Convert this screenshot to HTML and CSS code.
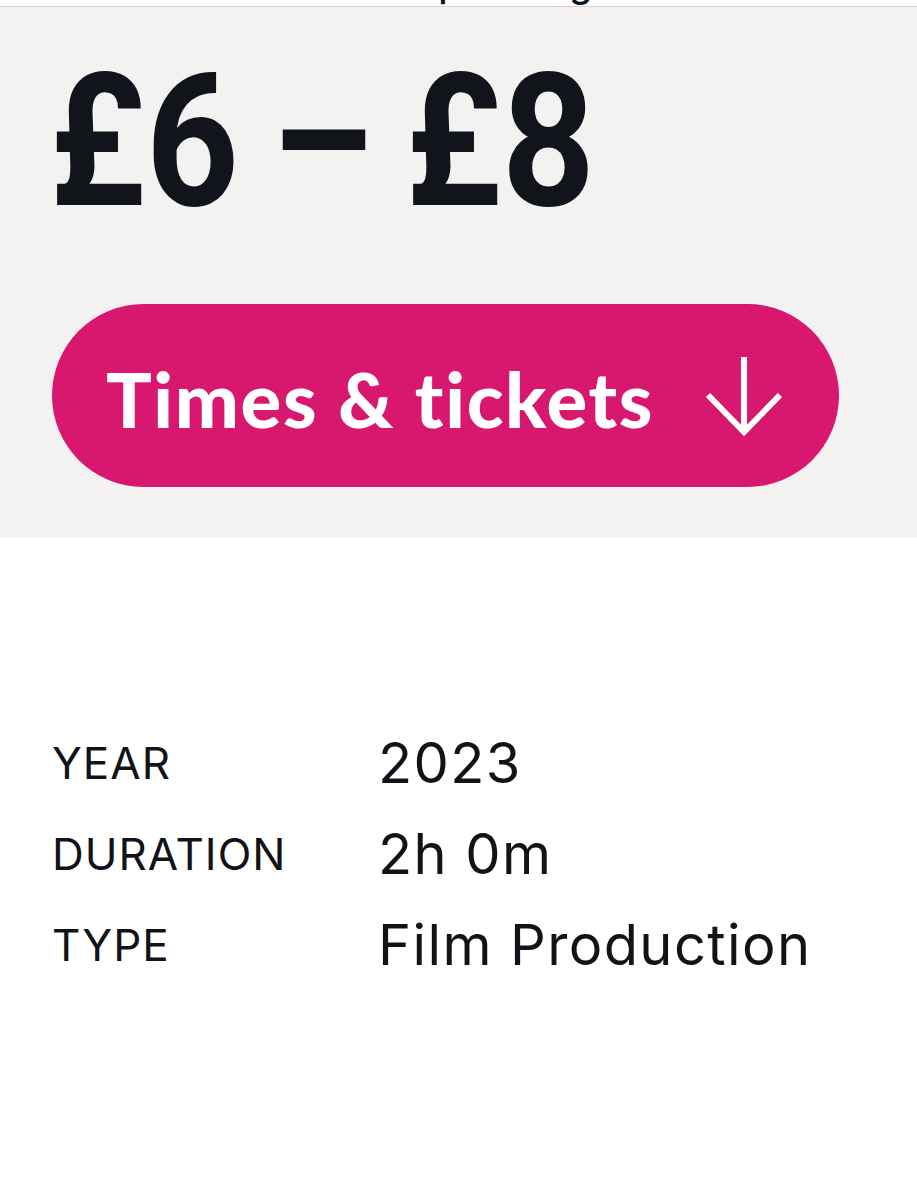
FILE: index.html
```html
<!DOCTYPE html>
<html lang="en">
<head>
<meta charset="utf-8">
<title>Times &amp; tickets</title>
<link rel="stylesheet" href="styles.css">
</head>
<body>
<div class="cut"><span class="cut-text">upcoming</span></div>
<section class="hero">
  <p class="price"><span class="price-text">£6 – £8</span></p>
  <a class="cta" href="#times">
    <span class="cta-label">Times &amp; tickets</span>
    <svg class="cta-icon" viewBox="0 0 80 82" width="80" height="82" aria-hidden="true">
      <path d="M40 2 V77" fill="none" stroke="#fff" stroke-width="6"/>
      <path d="M4 40 L40 77 L76 40" fill="none" stroke="#fff" stroke-width="6" stroke-linejoin="miter"/>
    </svg>
  </a>
</section>
<dl class="details">
  <dt class="label">YEAR</dt><dd class="value">2023</dd>
  <dt class="label">DURATION</dt><dd class="value">2h 0m</dd>
  <dt class="label">TYPE</dt><dd class="value">Film Production</dd>
</dl>
</body>
</html>
```

FILE: styles.css
```css
html, body {
  margin: 0;
  padding: 0;
  background: #ffffff;
  color: #111319;
}

.cut {
  height: 6px;
  overflow: hidden;
  padding-left: 416px;
  border-bottom: 1px solid #d2d2d2;
}

.cut-text {
  display: block;
  margin-top: -35px;
  font-family: Inter, "Liberation Sans", sans-serif;
  font-size: 37px;
  line-height: 37px;
  font-weight: 500;
  color: #111319;
}

.hero {
  background: #f4f2f1;
  padding: 41px 78px 51px 52px;
}

.price {
  margin: 0 0 0 -3px;
  font-family: Roboto, "Liberation Sans", sans-serif;
  font-weight: 700;
  font-size: 186px;
  line-height: 1;
  color: #11141a;
  white-space: nowrap;
}

.price-text {
  display: inline-block;
  transform: scaleX(0.875);
  transform-origin: left center;
  word-spacing: -10px;
}

.cta {
  margin-top: 70px;
  box-sizing: border-box;
  height: 183px;
  width: 787px;
  border-radius: 92px;
  background: #d8176f;
  display: flex;
  align-items: center;
  justify-content: space-between;
  padding: 0 55px 0 54px;
  text-decoration: none;
  color: #ffffff;
}

.cta-label {
  font-family: Lato, "Open Sans", sans-serif;
  font-weight: 900;
  font-size: 76px;
  line-height: 1;
  letter-spacing: 1.7px;
  font-variant-ligatures: none;
  padding-top: 6px;
}

.cta-icon {
  display: block;
  flex: none;
}

.details {
  margin: 191px 0 0 0;
  padding: 0 0 0 52px;
  display: grid;
  grid-template-columns: 326px 1fr;
  row-gap: 23px;
  align-items: center;
}

.label {
  margin: 0;
  font-family: Inter, "Liberation Sans", sans-serif;
  font-size: 44px;
  font-weight: 400;
  letter-spacing: 1px;
  color: #111319;
}

.value {
  margin: 0;
  font-family: Inter, "Liberation Sans", sans-serif;
  font-size: 56px;
  font-weight: 400;
  letter-spacing: 1.4px;
  color: #111319;
}
```
